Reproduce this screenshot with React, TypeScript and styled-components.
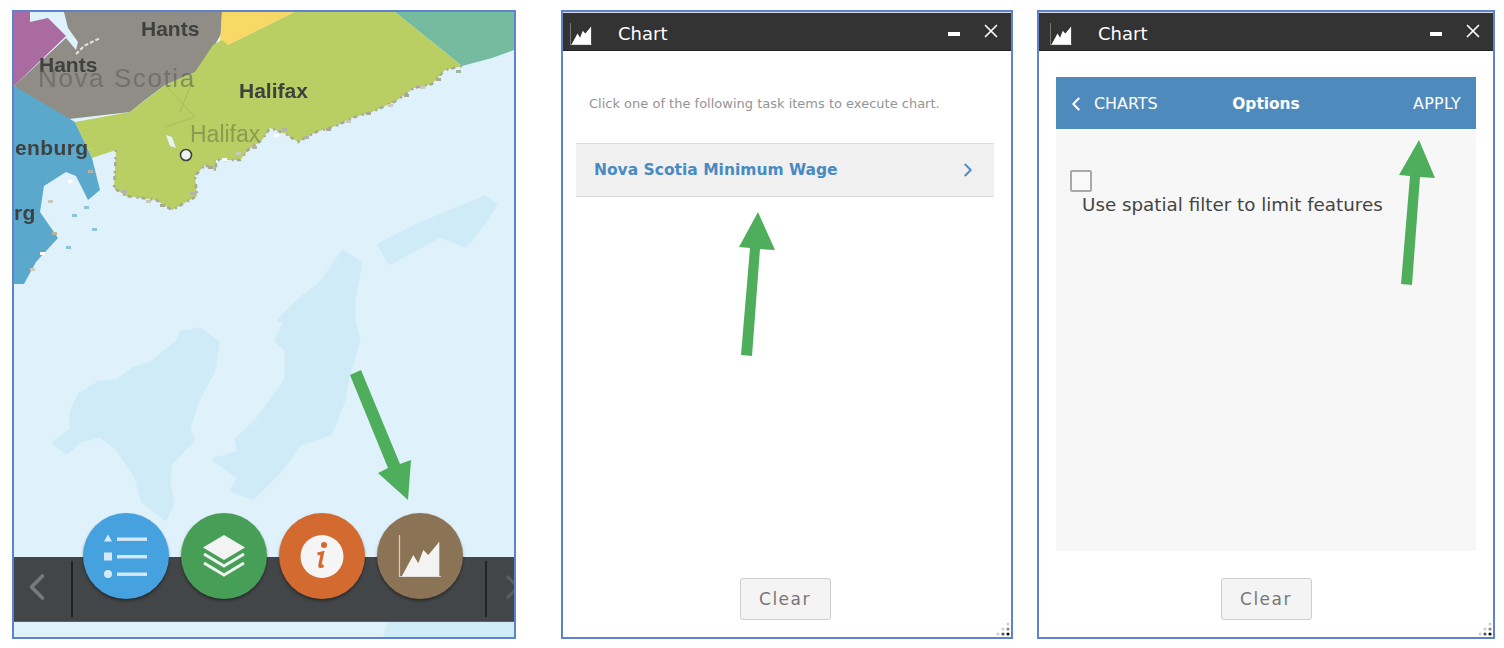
import * as React from "react";
import styled, { createGlobalStyle } from "styled-components";
import { ChevronLeft, ChevronRight, X } from "lucide-react";

const GlobalStyle = createGlobalStyle`
  html, body {
    margin: 0;
    background: #fff;
    overflow: hidden;
  }
  * { box-sizing: border-box; }
`;

const Page = styled.div`
  position: relative;
  display: flex;
  align-items: flex-start;
  width: 1504px;
  height: 648px;
  padding: 10px 0 0 12px;
  font-family: "DejaVu Sans", Verdana, sans-serif;
`;

const Panel = styled.section<{ $width: number; $offset?: number }>`
  position: relative;
  display: flex;
  flex-direction: column;
  flex: none;
  width: ${p => p.$width}px;
  height: 629px;
  margin-left: ${p => p.$offset || 0}px;
  border: 2px solid #5f82cf;
  background: #fff;
  overflow: hidden;
`;

const MapCanvas = styled.svg`
  display: block;
  width: 500px;
  height: 625px;
  background: #dff1fb;
  filter: blur(0.6px);
`;

const MapLabel = styled.text<{ $size?: number; $color?: string; $weight?: number }>`
  font-family: "Liberation Sans", Arial, sans-serif;
  font-size: ${p => p.$size || 21}px;
  font-weight: ${p => p.$weight || 700};
  fill: ${p => p.$color || "#3f4140"};
`;

const Island = styled.polygon`
  fill: #cfebf7;
  stroke: #cfebf7;
  stroke-width: 5;
  stroke-linejoin: round;
`;

const Dock = styled.div`
  position: absolute;
  left: 0;
  right: 0;
  bottom: 15px;
  display: flex;
  height: 65px;
  background: #434648;
  border-bottom: 1px solid #5c6062;
`;

const DockArrow = styled.div`
  display: flex;
  flex: none;
  align-items: center;
  justify-content: center;
  width: 57px;
  height: 60px;
  padding-right: 12px;
  color: #77797a;
`;

const DockSeparator = styled.div`
  flex: none;
  width: 2px;
  height: 56px;
  margin-top: 4px;
  background: #202324;
`;

const Launchers = styled.div`
  display: flex;
  flex: none;
  gap: 12px;
  margin: -44px 22px 0 10px;
`;

const Launcher = styled.div<{ $color: string }>`
  width: 86px;
  height: 86px;
  border-radius: 50%;
  background: ${p => p.$color};
  box-shadow: 0 2px 3px rgba(0, 0, 0, 0.4);
`;

const LauncherIcon = styled.svg`
  display: block;
  width: 86px;
  height: 86px;
`;

const RightStub = styled.div`
  display: flex;
  flex: none;
  align-items: center;
  height: 60px;
  margin-left: 6px;
  color: #5a5d5e;
`;

const TopStrip = styled.div`
  flex: none;
  height: 1px;
  background: #d9dde3;
`;

const TitleBar = styled.header<{ $inset: number }>`
  display: flex;
  align-items: center;
  flex: none;
  height: 38px;
  padding: 5px 0 0 ${p => p.$inset}px;
  background: #333;
  border-bottom: 1px solid #222;
  color: #fff;
`;

const TitleIcon = styled.svg`
  flex: none;
  width: 22px;
  height: 22px;
`;

const WindowTitle = styled.h2`
  margin: 0 0 0 26px;
  font-size: 18px;
  font-weight: 400;
  line-height: 22px;
`;

const WindowControls = styled.div`
  display: flex;
  align-items: center;
  margin-left: auto;
  margin-top: -7px;
  padding-right: 9px;
  gap: 20px;
`;

const Minimize = styled.div`
  width: 12px;
  height: 4px;
  margin-top: 6px;
  background: #fff;
`;

const WindowBody = styled.div<{ $paddingTop: number; $paddingLeft: number; $paddingRight: number }>`
  display: flex;
  flex-direction: column;
  flex: 1;
  min-height: 0;
  padding: ${p => p.$paddingTop}px ${p => p.$paddingRight}px 17px ${p => p.$paddingLeft}px;
`;

const Hint = styled.p`
  margin: 0 0 29px 13px;
  color: #949494;
  font-size: 13px;
  line-height: 20px;
`;

const TaskRow = styled.div`
  display: flex;
  align-items: center;
  justify-content: space-between;
  height: 54px;
  padding: 0 15px 0 18px;
  background: #f0f0f0;
  border-top: 1px solid #dcdcdc;
  border-bottom: 1px solid #dcdcdc;
  color: #4a8ac2;
`;

const TaskName = styled.span`
  font-size: 15.5px;
  font-weight: 700;
`;

const Spacer = styled.div`
  flex: 1;
`;

const OptionsCard = styled.div`
  display: flex;
  flex-direction: column;
  flex: 1;
  min-height: 0;
  background: #f7f7f7;
`;

const OptionsHeader = styled.div`
  display: grid;
  grid-template-columns: 1fr auto 1fr;
  align-items: center;
  flex: none;
  height: 52px;
  padding: 1px 15px 0;
  background: #4f8abd;
  color: #fff;
  font-size: 15.9px;
`;

const BackLink = styled.div`
  display: flex;
  align-items: center;
  gap: 7px;
  margin-left: -6px;
`;

const OptionsTitle = styled.div`
  font-size: 15.4px;
  font-weight: 700;
`;

const ApplyLink = styled.div`
  justify-self: end;
  letter-spacing: 0.3px;
`;

const OptionsForm = styled.div`
  padding: 41px 14px 0;
`;

const CheckBox = styled.div`
  width: 22px;
  height: 22px;
  background: #f9f9f9;
  border: 2px solid #a9a9a9;
  border-radius: 2px;
`;

const CheckLabel = styled.div`
  margin: 2px 0 0 12px;
  color: #444;
  font-size: 18.3px;
  line-height: 22px;
`;

const Footer = styled.div`
  display: flex;
  justify-content: center;
  flex: none;
  padding-top: 27px;
`;

const ClearButton = styled.button`
  width: 91px;
  height: 42px;
  padding: 0;
  background: #f4f4f4;
  border: 1px solid #cdcdcd;
  border-radius: 3px;
  color: #777;
  font-family: inherit;
  font-size: 17px;
  letter-spacing: 1.5px;
`;

const ResizeGrip = styled.svg`
  position: absolute;
  right: 0;
  bottom: 0;
  width: 18px;
  height: 18px;
`;

const Arrow = styled.svg<{ $left: number; $top: number; $width: number; $height: number }>`
  position: absolute;
  left: ${p => p.$left}px;
  top: ${p => p.$top}px;
  width: ${p => p.$width}px;
  height: ${p => p.$height}px;
  fill: #4fae5c;
`;

const greenLand =
  "228,45 295,12 395,12 462,66 445,70 432,84 414,88 396,101 372,112 352,118 336,126 316,132 298,142 286,134 270,128 262,140 248,150 240,160 216,160 216,170 205,165 195,176 197,196 172,210 156,200 126,196 114,188 116,150 92,158 75,122 130,112 165,85 195,72 213,45 222,40";
const islandLeft =
  "200,330 217,343 213,370 197,400 188,427 192,440 170,463 168,483 172,503 165,518 143,500 137,477 117,447 100,435 80,440 67,452 55,443 72,430 72,413 80,395 100,383 117,382 133,370 150,365 177,343 182,333";
const islandMiddle =
  "280,320 300,300 320,285 343,253 360,263 353,300 353,320 358,340 347,377 343,400 330,433 300,443 280,470 253,497 233,490 240,477 215,460 240,453 237,440 258,420 287,380 287,350 277,340 287,320";
const islandRight = "380,245 420,225 485,198 495,205 470,240 465,245 440,235 390,262";
const coastSpecks = [
  [456, 70, "#9fb9a0"], [436, 78, "#a9a998"], [420, 86, "#c9c9bd"], [404, 94, "#a9a998"], [388, 104, "#c9c9bd"],
  [366, 112, "#a9a998"], [346, 120, "#c9c9bd"], [326, 128, "#a9a998"], [304, 136, "#b3b3a6"], [274, 134, "#ffffff"],
  [282, 128, "#b3b3a6"], [252, 146, "#b3b3a6"], [236, 152, "#c9c9bd"], [222, 158, "#ffffff"], [208, 166, "#a9a998"],
  [190, 192, "#b3b3a6"], [160, 204, "#a9a998"], [146, 200, "#c9c9bd"], [122, 190, "#b3b3a6"], [88, 170, "#b3b3a6"],
  [68, 180, "#ffffff"], [48, 200, "#c9c9bd"], [52, 232, "#b3b3a6"], [40, 252, "#ffffff"], [30, 268, "#c9c9bd"],
  [72, 214, "#8fc3dc"], [84, 206, "#8fc3dc"], [66, 246, "#8fc3dc"], [92, 228, "#8fc3dc"],
] as const;

const ChartGlyph = () => (
  <>
    <path d="M22.5 22v41.5H64" fill="none" stroke="currentColor" strokeWidth="1.2" opacity="0.7" />
    <path d="M24.7 63.5 36.3 42l5 8.3 5-13.3 5 5 11-13.3v34.8z" fill="currentColor" />
  </>
);

const MapPanel = () => (
  <Panel $width={504}>
    <MapCanvas viewBox="14 12 500 625">
      <Island points={islandLeft} />
      <Island points={islandMiddle} />
      <Island points={islandRight} />
      <polygon points="383,637 388,620 514,620 514,637" fill="#cfebf7" />
      <polygon points="14,12 30,12 30,22 48,18 66,36 14,86" fill="#a96ba0" />
      <polygon points="64,12 222,12 221,34 212,50 196,72 165,85 145,100 130,112 60,120 14,86 66,38 76,50 78,42 68,28" fill="#8f8d86" />
      <polyline points="76,54 84,46 92,42 100,38" fill="none" stroke="#e6e6de" strokeWidth="2" strokeDasharray="4 2" />
      <polygon points="222,12 295,12 228,45 220,42" fill="#f9d966" />
      <polygon points="395,12 514,12 514,50 492,58 462,66" fill="#74bba0" />
      <polygon points="14,86 75,122 92,158 100,190 88,200 76,176 66,172 44,186 40,212 58,238 36,262 24,284 14,284" fill="#5aa9cc" />
      <polygon points={greenLand} fill="#b9ce63" />
      <polyline points="462,66 445,70 432,84 414,88 396,101 372,112 352,118 336,126 316,132 298,142 286,134 270,128 262,140 248,150 240,160 216,160 216,170 205,165 195,176 197,196 172,210 156,200 126,196 114,188 116,150" fill="none" stroke="#a7a798" strokeWidth="2.5" strokeDasharray="2 5 4 3" />
      {coastSpecks.map(([x, y, color]) => (
        <rect key={`${x}-${y}`} x={x} y={y} width="5" height="3" fill={color} />
      ))}
      <path d="M165 85l30 32-30 10M180 112l12-30" fill="none" stroke="#a9bc5b" strokeWidth="1" />
      <polygon points="166,135 172,137 176,148 170,146" fill="#e6f3f6" />
      <MapLabel x="141" y="36">Hants</MapLabel>
      <MapLabel x="39" y="72">Hants</MapLabel>
      <MapLabel x="38" y="87" $size={26} $weight={400} $color="rgba(90,90,90,0.55)" letterSpacing="1.6">Nova Scotia</MapLabel>
      <MapLabel x="239" y="98">Halifax</MapLabel>
      <MapLabel x="190" y="142" $size={23} $weight={400} $color="#8b9c52">Halifax</MapLabel>
      <MapLabel x="15" y="155" letterSpacing="0.4">enburg</MapLabel>
      <MapLabel x="14" y="220" letterSpacing="0.4">rg</MapLabel>
      <circle cx="186" cy="155" r="5.5" fill="#eef4ee" stroke="#3e403c" strokeWidth="1.6" />
    </MapCanvas>
    <Dock>
      <DockArrow>
        <ChevronLeft size={44} strokeWidth={2} />
      </DockArrow>
      <DockSeparator />
      <Launchers>
        <Launcher $color="#45a2df">
          <LauncherIcon viewBox="0 0 86 86" fill="#d5e9f6">
            <path d="M25 21.5l4 7h-8z" />
            <rect x="21" y="39.5" width="8" height="8" />
            <circle cx="25" cy="61" r="4" />
            <rect x="34" y="24.5" width="30" height="3.4" />
            <rect x="34" y="42" width="30" height="3.4" />
            <rect x="34" y="59.5" width="30" height="3.4" />
          </LauncherIcon>
        </Launcher>
        <Launcher $color="#479e57">
          <LauncherIcon viewBox="0 0 86 86">
            <path d="M43 22l21 12.5L43 47 22 34.5z" fill="#f3f3f3" />
            <path d="M23 41l20 12 20-12M23 50l20 12 20-12" fill="none" stroke="#eef3ee" strokeWidth="3" />
          </LauncherIcon>
        </Launcher>
        <Launcher $color="#d36a2f">
          <LauncherIcon viewBox="0 0 86 86">
            <circle cx="43" cy="43.5" r="21.5" fill="#f5f5f5" />
            <circle cx="45" cy="32" r="3" fill="#d36a2f" />
            <path d="M38.5 41l5-1.2-2.6 12.2c-.3 1.6.6 2 3.6.5" fill="none" stroke="#d36a2f" strokeWidth="3.2" />
          </LauncherIcon>
        </Launcher>
        <Launcher $color="#8b7355">
          <LauncherIcon viewBox="0 0 86 86" color="#f3f3f3">
            <ChartGlyph />
          </LauncherIcon>
        </Launcher>
      </Launchers>
      <DockSeparator />
      <RightStub>
        <ChevronRight size={40} strokeWidth={2} />
      </RightStub>
    </Dock>
    <Arrow $left={0} $top={0} $width={500} $height={625} viewBox="14 12 500 625">
      <polygon points="350,375 361,370 400,464 411,460 408,500 378,473 388,468" />
    </Arrow>
  </Panel>
);

const WindowFrame = ({ inset, children }: { inset: number; children: React.ReactNode }) => (
  <>
    <TopStrip />
    <TitleBar $inset={inset}>
      <TitleIcon viewBox="22 22 42 42" color="#fff">
        <ChartGlyph />
      </TitleIcon>
      <WindowTitle>Chart</WindowTitle>
      <WindowControls>
        <Minimize />
        <X size={22} strokeWidth={1.8} />
      </WindowControls>
    </TitleBar>
    {children}
    <ResizeGrip viewBox="0 0 18 18">
      <circle cx="15" cy="15" r="1.6" fill="#111" />
      <circle cx="10" cy="15" r="1.6" fill="#555" />
      <circle cx="5" cy="15" r="1.5" fill="#ccc" />
      <circle cx="15" cy="10" r="1.6" fill="#888" />
      <circle cx="10" cy="10" r="1.5" fill="#ccc" />
      <circle cx="15" cy="5" r="1.5" fill="#ccc" />
    </ResizeGrip>
  </>
);

const ClearFooter = () => (
  <Footer>
    <ClearButton>Clear</ClearButton>
  </Footer>
);

export default function App() {
  return (
    <Page>
      <GlobalStyle />
      <MapPanel />
      <Panel $width={452} $offset={45}>
        <WindowFrame inset={7}>
          <WindowBody $paddingTop={43} $paddingLeft={13} $paddingRight={17}>
            <Hint>Click one of the following task items to execute chart.</Hint>
            <TaskRow>
              <TaskName>Nova Scotia Minimum Wage</TaskName>
              <ChevronRight size={22} strokeWidth={2} />
            </TaskRow>
            <Spacer />
            <ClearFooter />
          </WindowBody>
        </WindowFrame>
        <Arrow $left={166} $top={190} $width={60} $height={160} viewBox="729 202 60 160">
          <polygon points="741,355 752,356 760,249 775,250 758,212 739,247 750,248" />
        </Arrow>
      </Panel>
      <Panel $width={458} $offset={24}>
        <WindowFrame inset={11}>
          <WindowBody $paddingTop={26} $paddingLeft={17} $paddingRight={17}>
            <OptionsCard>
              <OptionsHeader>
                <BackLink>
                  <ChevronLeft size={22} strokeWidth={2.2} />
                  CHARTS
                </BackLink>
                <OptionsTitle>Options</OptionsTitle>
                <ApplyLink>APPLY</ApplyLink>
              </OptionsHeader>
              <OptionsForm>
                <CheckBox />
                <CheckLabel>Use spatial filter to limit features</CheckLabel>
              </OptionsForm>
            </OptionsCard>
            <ClearFooter />
          </WindowBody>
        </WindowFrame>
        <Arrow $left={350} $top={118} $width={60} $height={160} viewBox="1389 130 60 160">
          <polygon points="1401,284 1412,285 1420,177 1435,178 1419,140 1399,175 1410,176" />
        </Arrow>
      </Panel>
    </Page>
  );
}
